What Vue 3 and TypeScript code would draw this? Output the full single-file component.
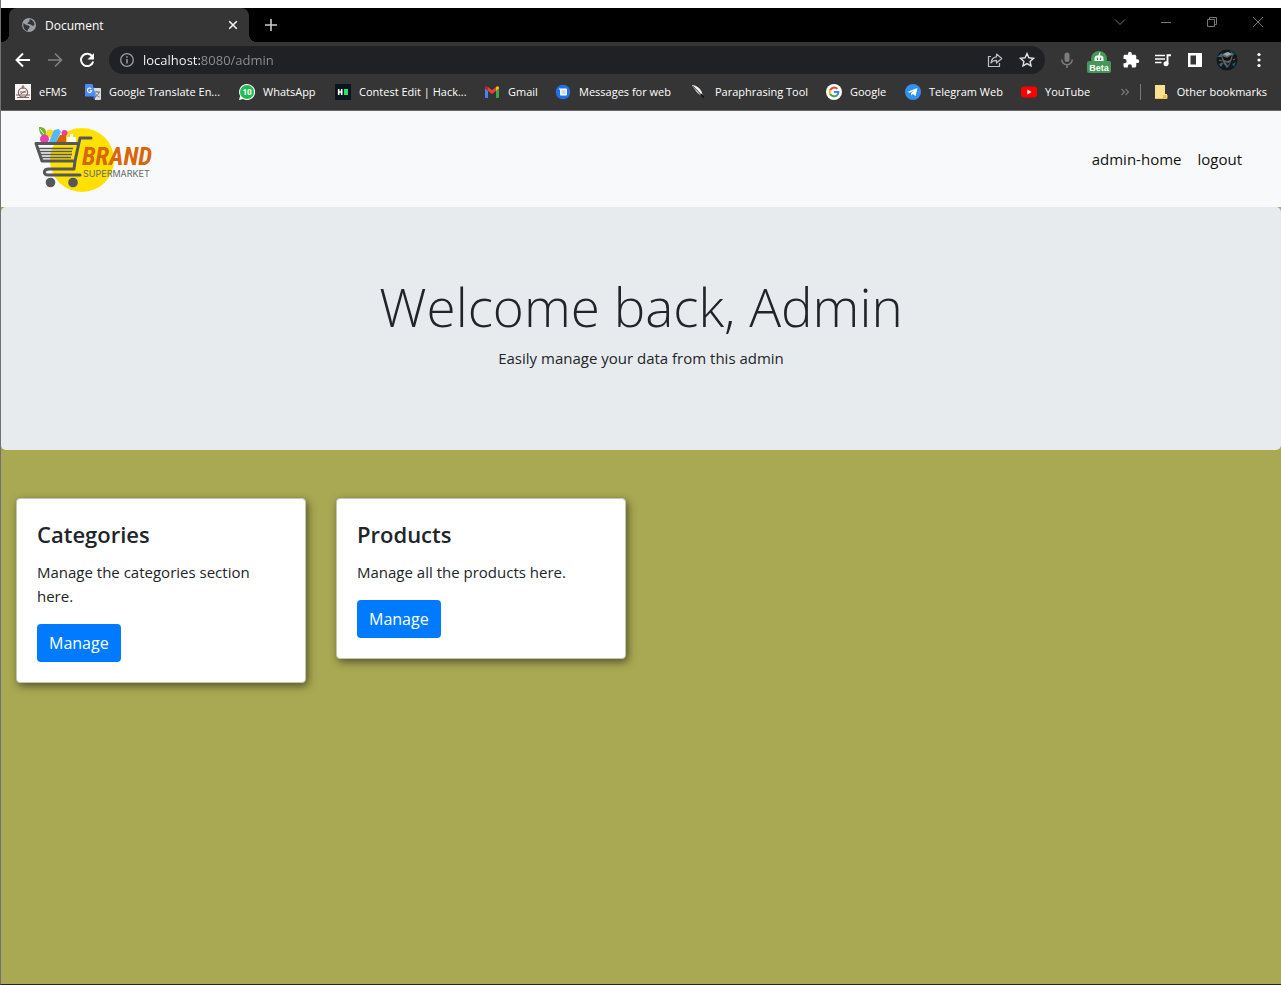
<script setup lang="ts">
import { ref } from 'vue'

interface Bookmark {
  icon: string
  label: string
}

interface Section {
  title: string
  text: string
}

const address = ref('localhost:8080/admin')

const bookmarks: Bookmark[] = [
  { icon: 'efms', label: 'eFMS' },
  { icon: 'translate', label: 'Google Translate En...' },
  { icon: 'whatsapp', label: 'WhatsApp' },
  { icon: 'hack', label: 'Contest Edit | Hack...' },
  { icon: 'gmail', label: 'Gmail' },
  { icon: 'messages', label: 'Messages for web' },
  { icon: 'quill', label: 'Paraphrasing Tool' },
  { icon: 'google', label: 'Google' },
  { icon: 'telegram', label: 'Telegram Web' },
  { icon: 'youtube', label: 'YouTube' },
]

const sections: Section[] = [
  { title: 'Categories', text: 'Manage the categories section here.' },
  { title: 'Products', text: 'Manage all the products here.' },
]
</script>

<template>
  <div class="window">
    <header class="chrome">
      <div class="tabstrip">
        <div class="tab">
          <svg class="globe" viewBox="0 0 16 16" width="16" height="16">
            <circle cx="8" cy="8" r="7" fill="#9aa0a6" />
            <path d="M2.4 6.2C4 6.6 4.6 8 6.2 8.2c1.600.2 2.600.6 2.400 2-.2 1.200-1.800 1.400-2 3.800C3.600 13.300 1.800 10.500 2.400 6.200zM8.600 2.200c-.8 1.200.4 1.700-.6 2.600-.8.700-1.600.8-1.400 1.700.3.900 2.200.3 3.200.9.900.6 1.300 1.600 2.400 1.400.9-.2 1.200-1 1.300-1.600C13.300 4.700 11.400 2.500 8.600 2.200z" fill="#35363a" />
          </svg>
          <span class="tab-title">Document</span>
          <button class="bare" aria-label="Close tab">
            <svg viewBox="0 0 16 16" width="16" height="16"><path d="M4.200 4.200l7.600 7.600M11.800 4.200l-7.600 7.600" stroke="#f1f3f4" stroke-width="1.600" /></svg>
          </button>
        </div>
        <button class="bare new-tab" aria-label="New tab">
          <svg viewBox="0 0 16 16" width="16" height="16"><path d="M8 2v12M2 8h12" stroke="#c9cbce" stroke-width="1.600" /></svg>
        </button>
        <div class="window-controls">
          <button class="bare" aria-label="Search tabs"><svg viewBox="0 0 12 12" width="12" height="12"><path d="M1 3.500l5 5 5-5" fill="none" stroke="#777" /></svg></button>
          <button class="bare" aria-label="Minimize"><svg viewBox="0 0 12 12" width="12" height="12"><path d="M1 6.500h10" stroke="#777" /></svg></button>
          <button class="bare" aria-label="Restore"><svg viewBox="0 0 12 12" width="12" height="12"><path d="M1.500 3.500h7v7h-7zM3.500 3.500v-2h7v7h-2" fill="none" stroke="#777" /></svg></button>
          <button class="bare" aria-label="Close"><svg viewBox="0 0 12 12" width="12" height="12"><path d="M1 1l10 10M11 1L1 11" stroke="#777" /></svg></button>
        </div>
      </div>

      <div class="toolbar">
        <button class="bare tool" aria-label="Back"><svg viewBox="0 0 18 18" width="18" height="18"><path d="M16 9H3M9 2.500L2.500 9 9 15.500" fill="none" stroke="#fff" stroke-width="1.900" /></svg></button>
        <button class="bare tool" aria-label="Forward"><svg viewBox="0 0 18 18" width="18" height="18"><path d="M2 9h13M9 2.500L15.500 9 9 15.500" fill="none" stroke="#818181" stroke-width="1.700" /></svg></button>
        <button class="bare tool" aria-label="Reload"><svg viewBox="0 0 18 18" width="18" height="18"><path d="M14.300 5.300A6.200 6.200 0 1 0 15.200 10.500" fill="none" stroke="#fff" stroke-width="2" /><path d="M16 2v6.500H9.500z" fill="#fff" /></svg></button>
        <form class="omnibox" @submit.prevent>
          <svg viewBox="0 0 16 16" width="16" height="16"><circle cx="8" cy="8" r="6.300" fill="none" stroke="#9aa0a6" stroke-width="1.300" /><path d="M8 7v4.500M8 4.200v1.600" stroke="#9aa0a6" stroke-width="1.500" /></svg>
          <input v-model="address" class="address" type="text" aria-label="Address" spellcheck="false" />
          <button class="bare omni-action" type="button" aria-label="Share"><svg viewBox="0 0 16 16" width="16" height="16"><path d="M4 4.500H1.500v10h11V11" fill="none" stroke="#bdc1c6" stroke-width="1.200" /><path d="M9.500 2l5.300 4.500-5.300 4.500V8.300C7 8.300 5.300 9 4 11c.3-3.500 2.200-5.800 5.500-6.200z" fill="none" stroke="#bdc1c6" stroke-width="1.200" stroke-linejoin="round" /></svg></button>
          <button class="bare omni-action" type="button" aria-label="Bookmark this tab"><svg viewBox="0 0 16 16" width="16" height="16"><path d="M8 1.600l1.900 4.200 4.600.5-3.400 3.100.9 4.500L8 11.600l-4 2.300.9-4.500L1.500 6.300l4.600-.5z" fill="none" stroke="#dfe1e5" stroke-width="1.400" /></svg></button>
        </form>
        <button class="bare tool" aria-label="Voice"><svg viewBox="0 0 18 18" width="18" height="18"><rect x="6.500" y="1.500" width="5" height="9.500" rx="2.500" fill="#7d7d7d" /><path d="M3.800 8.500a5.200 5.200 0 0 0 10.400 0M9 13.500V17" fill="none" stroke="#7d7d7d" stroke-width="1.500" /></svg></button>
        <button class="bare tool" aria-label="Beta extension">
          <svg viewBox="0 0 26 26" width="26" height="26"><circle cx="13" cy="12" r="8" fill="#469858" /><path d="M8.500 14V11.500c0-2 1.200-3 3-3h3c1.800 0 3 1 3 3V14z" fill="#fff" /><path d="M13 9l1-3.500" stroke="#fff" stroke-width="1.200" /><path d="M11.500 10.500v2.500M14.500 10.500v2.500" stroke="#469858" stroke-width="1.300" /><rect x="1" y="14" width="24" height="12" rx="2" fill="#469858" /><text x="13" y="23.500" class="beta">Beta</text></svg>
        </button>
        <button class="bare tool" aria-label="Extensions"><svg viewBox="0 0 24 24" width="18" height="18"><path fill="#fff" d="M20.500 11H19V7c0-1.100-.9-2-2-2h-4V3.500a2.500 2.500 0 0 0-5 0V5H4c-1.100 0-2 .9-2 2v3.800h1.500a2.700 2.700 0 0 1 0 5.400H2V20c0 1.100.9 2 2 2h3.800v-1.500a2.700 2.700 0 0 1 5.400 0V22H17c1.100 0 2-.9 2-2v-4h1.500a2.500 2.500 0 0 0 0-5z" /></svg></button>
        <button class="bare tool" aria-label="Media"><svg viewBox="0 0 18 18" width="18" height="18"><path d="M1 4.500h10M1 8h10M1 11.500h6.500" stroke="#fff" stroke-width="1.700" /><path d="M13.500 13V4.300H17" fill="none" stroke="#fff" stroke-width="1.900" /><circle cx="12" cy="12.700" r="2.500" fill="#fff" /></svg></button>
        <button class="bare tool" aria-label="Side panel"><svg viewBox="0 0 16 16" width="16" height="16"><path fill="#fff" fill-rule="evenodd" d="M1 1h14v14H1zM3.500 3.500v9H9v-9z" /></svg></button>
        <button class="bare tool" aria-label="Profile">
          <svg viewBox="0 0 22 22" width="22" height="22"><circle cx="11" cy="11" r="10.500" fill="#10191d" /><path d="M1 8l5-4 1 4zM3 15l5-2-3 5z" fill="#386b7e" /><path d="M14 1l5 4-3 2zM16 15l4-2-2 5z" fill="#215268" /><path d="M5 6l6-3 6 2-1 5-3 7-2 2-3-4-2-5z" fill="#5b6567" /><path d="M6 7l5 2 5-3-2 5-3 1-3-1z" fill="#111" /><path d="M9 13l3 1 2-1-2 4z" fill="#182226" /><path d="M7 5l5-2 4 2-5 2z" fill="#9ea6a7" /><path d="M3 11l3 1M17 11l2-1" stroke="#a95c40" /></svg>
        </button>
        <button class="bare tool" aria-label="Menu"><svg viewBox="0 0 18 18" width="18" height="18" fill="#fff"><circle cx="9" cy="3.500" r="1.600" /><circle cx="9" cy="9" r="1.600" /><circle cx="9" cy="14.500" r="1.600" /></svg></button>
      </div>

      <nav class="bookmarks" aria-label="Bookmarks">
        <div class="bookmark-list">
          <a v-for="b in bookmarks" :key="b.label" class="bookmark" href="#">
            <svg viewBox="0 0 16 16" width="16" height="16">
              <template v-if="b.icon === 'efms'">
                <path fill="#f7f4f2" d="M0 0h16v16H0z" />
                <circle cx="8" cy="8.500" r="4.600" fill="none" stroke="#866b69" stroke-width="1.300" />
                <path d="M8 1v4M6.500 3h3M1 11h14M2 13.500h12M5 8h6M5.500 10l5-3" stroke="#80635f" stroke-width="1" />
              </template>
              <template v-else-if="b.icon === 'translate'">
                <path d="M7 4h8c.6 0 1 .4 1 1v10c0 .6-.4 1-1 1h-5z" fill="#dadce0" />
                <path d="M9 8h6M12 7v1M10 13c2-1 3.500-2.500 4-5M10.500 9.500c1 2 2.500 3 4 3.500" fill="none" stroke="#607988" />
                <path d="M1 0h6.500L11 12.500H1c-.6 0-1-.4-1-1V1c0-.6.400-1 1-1z" fill="#4c8bf5" />
                <path d="M8 12.500h3L9 16z" fill="#3367d6" />
                <path d="M6.300 4.800a2.200 2.200 0 1 0 .5 1.900H4.700" fill="none" stroke="#fff" stroke-width="1.100" />
              </template>
              <template v-else-if="b.icon === 'whatsapp'">
                <path d="M8 0a8 8 0 1 1-3.800 15L0 16l1.100-4A8 8 0 0 1 8 0z" fill="#fff" />
                <circle cx="8" cy="8" r="7" fill="#1fbc50" />
                <text x="8" y="11" class="count">10</text>
              </template>
              <template v-else-if="b.icon === 'hack'">
                <path d="M0 0h16v16H0z" fill="#0c141f" />
                <path d="M3.700 5v6M6.700 5v6M3 8h4" stroke="#fff" stroke-width="1.600" />
                <path d="M9 5h4v6H9z" fill="#1ee66b" />
              </template>
              <template v-else-if="b.icon === 'gmail'">
                <path d="M1 4l3 2.500V14H2a1 1 0 0 1-1-1z" fill="#4285f4" />
                <path d="M12 6.500L15 4v9a1 1 0 0 1-1 1h-2z" fill="#34a853" />
                <path d="M4 3l4 3.200L12 3v3.800L8 10 4 6.800z" fill="#ea4335" />
                <path d="M1 4c0-2 1.700-2.200 3-1v3.800L1 4.600z" fill="#c5221f" />
                <path d="M15 4c0-2-1.700-2.200-3-1v3.800l3-2.200z" fill="#fbbc04" />
              </template>
              <template v-else-if="b.icon === 'messages'">
                <circle cx="8" cy="8" r="7.300" fill="#1a73e8" />
                <path d="M3.500 4.500H11c.6 0 1 .4 1 1v5c0 .6-.4 1-1 1H6c-.6 0-1-.4-1-1V6z" fill="#fff" />
                <path d="M6.500 7h4M6.500 9h4" stroke="#8ab4f8" />
              </template>
              <template v-else-if="b.icon === 'quill'">
                <path d="M1 1c4 0 8 3 9.500 6.500L12 12C8 11 4 7 1 1z" fill="#f2f2f2" />
                <path d="M2 2.500c4 3.500 7 7 10.500 11" fill="none" stroke="#191919" stroke-width="1" />
                <path d="M10 10l2.500 3.500" stroke="#111" stroke-width="1.500" />
              </template>
              <template v-else-if="b.icon === 'google'">
                <circle cx="8" cy="8" r="8" fill="#fff" />
                <path d="M4.100 6.200A4.500 4.500 0 0 1 11.300 4.900" fill="none" stroke="#ea4335" stroke-width="2" />
                <path d="M4.200 10.200a4.600 4.600 0 0 1 0-4.300" fill="none" stroke="#fbbc05" stroke-width="2" />
                <path d="M11.200 11.100a4.500 4.500 0 0 1-7-1" fill="none" stroke="#34a853" stroke-width="2" />
                <path d="M8 8h4.400a4.500 4.500 0 0 1-1.400 3.300" fill="none" stroke="#4285f4" stroke-width="2" />
              </template>
              <template v-else-if="b.icon === 'telegram'">
                <circle cx="8" cy="8" r="8" fill="#3390ec" />
                <path d="M2.800 7.800l9.600-3.900-1.700 8.200-3-2-1.500 1.500-.2-2.500 3.500-2.800-4.600 2.500z" fill="#fff" />
              </template>
              <template v-else>
                <rect x="0" y="2.500" width="16" height="11" rx="3" fill="#f00" />
                <path d="M6.300 5.600v4.800L10.500 8z" fill="#fff" />
              </template>
            </svg>
            <span>{{ b.label }}</span>
          </a>
        </div>
        <button class="bare overflow" aria-label="More bookmarks"><svg viewBox="0 0 10 10" width="10" height="10"><path d="M1.500 2l3 3-3 3M5.500 2l3 3-3 3" fill="none" stroke="#77797c" stroke-width="1.200" /></svg></button>
        <a class="bookmark other" href="#">
          <svg viewBox="0 0 16 16" width="16" height="16"><path d="M2 1h10v9h2v5H2z" fill="#fce191" /><path d="M10 14v-3h3v3z" fill="#e8bd48" /><path d="M2 14.500h12V11" fill="none" stroke="#eac452" /></svg>
          <span>Other bookmarks</span>
        </a>
      </nav>
    </header>

    <div class="page">
      <nav class="navbar" aria-label="Main">
        <a class="brand" href="#" aria-label="Brand Supermarket">
          <svg viewBox="0 0 140 80" width="140" height="80">
            <circle cx="57" cy="41" r="32" fill="#ffe000" />
            <path d="M14 8c5 0 7 2 7 6l-1 4c-4-1-6-4-6-10z" fill="#72b52c" />
            <path d="M15 10l4 5" stroke="#eef7d9" />
            <circle cx="25" cy="14.500" r="4" fill="#ffd91a" />
            <circle cx="19.500" cy="20" r="4.500" fill="#e640b0" />
            <circle cx="39.500" cy="14" r="3" fill="#e640b0" />
            <path d="M24 23l5-12 5-1 2 3-5 10z" fill="#51b9f7" />
            <path d="M31 23l4-7h6v7z" fill="#d95f08" />
            <path d="M42 23v-5h3v-3h3v3h3v5z" fill="#fff" />
            <path d="M66 19H55L50 42H17L11 24.500H52M50 42l-1 8H24c-6 0-6 6-1 6h32" fill="none" stroke="#555759" stroke-width="3" stroke-linecap="round" stroke-linejoin="round" />
            <path d="M14 29.500h34M15 32.500h32M16 35.500h31M17 38.500h29" stroke="#555759" stroke-width="1.300" />
            <circle cx="25.500" cy="63.500" r="4.800" fill="#555759" />
            <circle cx="48" cy="63.500" r="4.800" fill="#555759" />
            <text x="57" y="46" class="logo-name">BRAND</text>
            <text x="58" y="58" class="logo-sub">SUPERMARKET</text>
          </svg>
        </a>
        <div class="nav-links">
          <a href="#">admin-home</a>
          <a href="#">logout</a>
        </div>
      </nav>

      <section class="hero">
        <h1>Welcome back, Admin</h1>
        <p>Easily manage your data from this admin</p>
      </section>

      <main class="cards">
        <article v-for="s in sections" :key="s.title" class="card">
          <h2>{{ s.title }}</h2>
          <p>{{ s.text }}</p>
          <a class="manage" href="#" role="button">Manage</a>
        </article>
      </main>
    </div>
  </div>
</template>

<style>
body {
  margin: 0;
}
</style>

<style scoped>
* {
  box-sizing: border-box;
}

.window {
  display: flex;
  flex-direction: column;
  min-height: 100vh;
  padding-top: 8px;
  border-left: 1px solid #737176;
  border-bottom: 1px solid #222622;
  background: #fff;
  font-family: "Open Sans", "Noto Sans", sans-serif;
}

svg {
  display: block;
  flex: none;
}

a {
  color: inherit;
  text-decoration: none;
}

.bare {
  display: flex;
  align-items: center;
  justify-content: center;
  padding: 0;
  border: 0;
  background: none;
}

.chrome {
  background: #353535;
  color: #fff;
  font-size: 12px;
  border-bottom: 1px solid #66666a;
}

.tabstrip {
  display: flex;
  height: 34px;
  padding-left: 8px;
  background: #000;
}

.tab {
  position: relative;
  display: flex;
  align-items: center;
  gap: 8px;
  width: 240px;
  padding: 0 8px 0 12px;
  border-radius: 8px 8px 0 0;
  background: #353535;
}

.tab::before,
.tab::after {
  content: "";
  position: absolute;
  bottom: 0;
  width: 8px;
  height: 8px;
}

.tab::before {
  right: 100%;
  background: radial-gradient(circle at 0 0, #000 8px, #353535 8px);
}

.tab::after {
  left: 100%;
  background: radial-gradient(circle at 100% 0, #000 8px, #353535 8px);
}

.tab-title {
  flex: 1;
}

.new-tab {
  width: 28px;
  margin-left: 8px;
}

.window-controls {
  display: flex;
  margin-left: auto;
  height: 28px;
}

.window-controls .bare {
  width: 46px;
}

.toolbar {
  display: flex;
  align-items: center;
  gap: 4px;
  height: 36px;
  padding: 0 8px;
}

.tool {
  flex: none;
  width: 28px;
  height: 28px;
}

.omnibox {
  display: flex;
  flex: 1;
  align-items: center;
  gap: 8px;
  height: 28px;
  margin: 0 4px;
  padding: 0 6px 0 10px;
  border-radius: 14px;
  background: #202124;
}

.address {
  flex: 1;
  min-width: 0;
  height: 24px;
  padding: 0;
  border: 0;
  outline: 0;
  background: linear-gradient(90deg, #fff 57px, #8d9094 57px);
  background-clip: text;
  -webkit-background-clip: text;
  color: transparent;
  font: 13px "Open Sans", "Noto Sans", sans-serif;
}

.omni-action {
  width: 24px;
  height: 24px;
}

.beta {
  fill: #fff;
  font-size: 9px;
  font-weight: 700;
  text-anchor: middle;
}

.bookmarks {
  display: flex;
  align-items: center;
  height: 32px;
  padding: 0 14px;
  padding-bottom: 4px;
  font-size: 11px;
}

.bookmark-list {
  display: grid;
  flex: 1;
  grid-template-columns: 70px 154px 96px 149px 71px 136px 135px 79px 116px 1fr;
  white-space: nowrap;
}

.bookmark {
  display: flex;
  align-items: center;
  gap: 8px;
  line-height: 16px;
}

.count {
  fill: #fff;
  font-size: 8px;
  font-weight: 700;
  text-anchor: middle;
}

.overflow {
  width: 30px;
}

.other {
  padding-left: 12px;
  border-left: 1px solid #77797c;
}

.page {
  display: flex;
  flex: 1;
  flex-direction: column;
  background: #a9a953;
  color: #212529;
  font-size: 15px;
  line-height: 24px;
}

.navbar {
  display: flex;
  align-items: center;
  justify-content: space-between;
  padding: 8px 31px 8px 24px;
  background: #f8f9fb;
}

.logo-name {
  fill: #d96607;
  font: italic bold 25px "Roboto Condensed", Roboto, sans-serif;
}

.logo-sub {
  fill: #66686b;
  font: 9px Inter, sans-serif;
}

.nav-links {
  display: flex;
}

.nav-links a {
  padding: 8px;
  color: #111;
}

.hero {
  padding: 64px 32px;
  border-radius: 5px;
  background: #e8ebee;
  text-align: center;
}

.hero h1 {
  margin: 0 0 4px;
  font-size: 53px;
  font-weight: 300;
  line-height: 71px;
}

.hero p {
  margin: 0 0 16px;
}

.cards {
  display: grid;
  grid-template-columns: repeat(4, 1fr);
  gap: 30px;
  align-items: start;
  padding: 48px 15px;
}

.card {
  padding: 20px;
  border: 1px solid #c5c5b4;
  border-radius: 4px;
  background: #fff;
  box-shadow: 2px 3px 8px rgba(0, 0, 0, 0.5);
}

.card h2 {
  margin: 0 0 10px;
  font-size: 22px;
  font-weight: 600;
  line-height: 31px;
}

.card p {
  margin: 0 0 16px;
}

.manage {
  display: inline-block;
  padding: 7px 12px;
  border-radius: 4px;
  background: #007bff;
  color: #fff;
  font-size: 16px;
  vertical-align: top;
}
</style>
